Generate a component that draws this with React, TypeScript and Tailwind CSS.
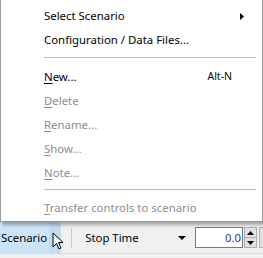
import React from 'react';

const font = { fontFamily: '"Segoe UI", "Noto Sans", "Open Sans", sans-serif' };

interface ItemProps {
  label: string;
  mnemonic?: number;
  disabled?: boolean;
  shortcut?: string;
  submenu?: boolean;
}

const MenuItem: React.FC<ItemProps> = ({ label, mnemonic, disabled, shortcut, submenu }) => {
  const text =
    mnemonic === undefined ? (
      label
    ) : (
      <>
        {label.slice(0, mnemonic)}
        <span className="underline underline-offset-2">{label[mnemonic]}</span>
        {label.slice(mnemonic + 1)}
      </>
    );
  return (
    <div
      className={`flex items-center h-[24px] pl-[43px] pr-[18px] text-[11.4px] ${
        disabled ? 'text-[#8d8d8d]' : 'text-[#000]'
      }`}
    >
      <span className="flex-1 whitespace-nowrap">{text}</span>
      {shortcut && <span className="text-[10.5px] mr-[12px]">{shortcut}</span>}
      {submenu && (
        <svg width="4" height="7" viewBox="0 0 4 7" className="mt-[1px]">
          <path d="M0 0 L4 3.5 L0 7 Z" fill="#000" />
        </svg>
      )}
    </div>
  );
};

const Separator = () => <div className="ml-[43px] mr-[6px] mt-[5px] mb-[7px] h-px bg-[#bcbcbc]" />;

export default function App() {
  return (
    <div className="relative w-[263px] h-[258px] bg-[#f0f0f0] overflow-hidden" style={font}>
      {/* popup menu */}
      <div className="relative z-10 h-[222px] bg-white border-l border-r border-b border-[#979797] shadow-[2px_3px_3px_rgba(0,0,0,0.3)] pt-[4px]">
        <MenuItem label="Select Scenario" submenu />
        <MenuItem label="Configuration / Data Files..." />
        <Separator />
        <MenuItem label="New..." mnemonic={0} shortcut="Alt-N" />
        <MenuItem label="Delete" mnemonic={0} disabled />
        <MenuItem label="Rename..." mnemonic={0} disabled />
        <MenuItem label="Show..." mnemonic={0} disabled />
        <MenuItem label="Note..." mnemonic={0} disabled />
        <div className="ml-[43px] mr-[6px] mt-[4px] mb-[6px] h-px bg-[#bcbcbc]" />
        <MenuItem label="Transfer controls to scenario" mnemonic={0} disabled />
      </div>

      {/* toolbar */}
      <div className="flex items-center h-[32px] text-[11.4px] text-black border-b border-[#dadada]">
        <div className="flex h-full bg-[#cce4f7]">
          <div className="flex items-center pl-[1px] pr-[2px]">Scenario</div>
          <div className="relative w-[12px] h-full bg-[#c4dcf0]">
            <svg width="13" height="19" viewBox="0 0 13 19" className="absolute left-[3px] top-[10px]">
              <path
                d="M1 1 L1 15 L4.5 11.5 L7 17 L9 16 L6.5 10.5 L11 10.5 Z"
                fill="#fff"
                stroke="#000"
                strokeWidth="1"
                strokeLinejoin="round"
              />
            </svg>
          </div>
        </div>
        <div className="ml-[10px] w-px h-[20px] bg-[#c6c6c6]" />
        <div className="ml-[13px] w-[92px]">Stop Time</div>
        <svg width="8" height="4" viewBox="0 0 8 4" className="ml-[2px]">
          <path d="M0 0 L8 0 L4 4 Z" fill="#000" />
        </svg>
        <div className="ml-[9px] w-[48px] h-[21px] bg-white border border-[#7a7a7a] flex items-center justify-end pr-[1px] text-[#1c3f94]">
          0.0
        </div>
        <div className="ml-[1px] w-[13px] h-[21px] flex flex-col border border-[#adadad] bg-[#e1e1e1]">
          <div className="flex-1 flex items-center justify-center border-b border-[#adadad]">
            <svg width="7" height="4" viewBox="0 0 7 4">
              <path d="M0 4 L7 4 L3.5 0 Z" fill="#000" />
            </svg>
          </div>
          <div className="flex-1 flex items-center justify-center">
            <svg width="7" height="4" viewBox="0 0 7 4">
              <path d="M0 0 L7 0 L3.5 4 Z" fill="#000" />
            </svg>
          </div>
        </div>
        <div className="ml-[2px] w-[4px] h-[21px] border-l border-t border-b border-[#adadad] bg-[#e1e1e1]" />
      </div>
    </div>
  );
}
